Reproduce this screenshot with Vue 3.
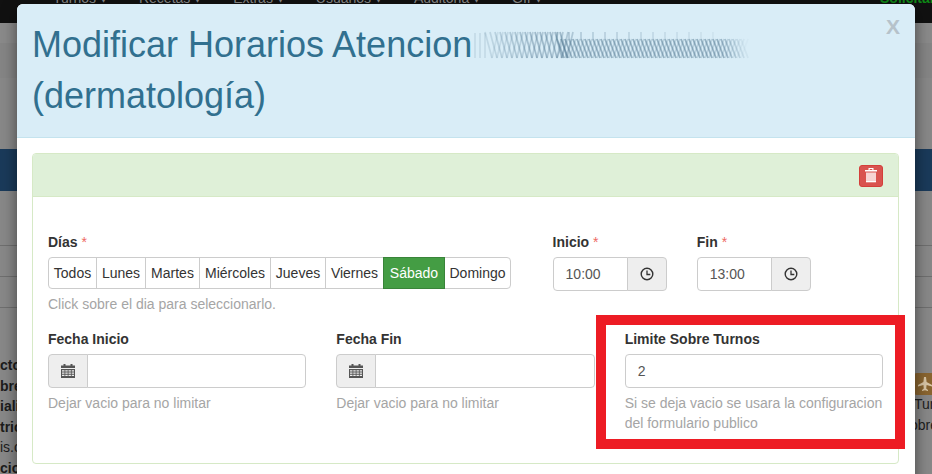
<script setup>
const days = [
  { name: 'Todos', w: 49 },
  { name: 'Lunes', w: 50 },
  { name: 'Martes', w: 55 },
  { name: 'Miércoles', w: 72 },
  { name: 'Jueves', w: 56 },
  { name: 'Viernes', w: 59 },
  { name: 'Sábado', w: 62, active: true },
  { name: 'Domingo', w: 67 }
]
const navItems = ['Turnos', 'Recetas', 'Extras', 'Usuarios', 'Auditoria', 'GII']
const leftBits = [
  { t: 'cto', b: true }, { t: 'bre', b: true }, { t: 'iali', b: true },
  { t: 'tric', b: true }, { t: 'is.c', b: false }, { t: 'cio', b: true }
]
const strokes = []
// pale uprights where the smear begins
for (let x = 2; x < 14; x += 5) {
  strokes.push({ x1: x, y1: 4, x2: x, y2: 29, o: 0.16 })
}
// tall zigzags that strengthen from the left
for (let x = 12; x < 92; x += 5) {
  const o = Math.min(0.42, 0.12 + x / 200)
  strokes.push({ x1: x, y1: 3, x2: x + 7, y2: 29, o })
  strokes.push({ x1: x + 7, y1: 29, x2: x + 13, y2: 3, o: o * 0.75 })
}
// short, dense zigzags of the low band, and pale uprights above them
for (let x = 84; x < 272; x += 4) {
  const fade = x < 246 ? 0.5 : Math.max(0, 0.5 * (1 - (x - 246) / 26))
  strokes.push({ x1: x, y1: 10, x2: x + 7, y2: 29, o: fade })
  strokes.push({ x1: x + 7, y1: 10, x2: x, y2: 29, o: fade * 0.45 })
  if (x < 250 && Math.round(x / 4) % 3 === 0) {
    strokes.push({ x1: x, y1: 3, x2: x, y2: 10, o: Math.max(0.08, 0.32 - (x - 84) / 650) })
  }
}
</script>

<template>
  <div class="screen">
    <div class="page">
      <div class="nav">
        <div class="nav-items">
          <span v-for="n in navItems" :key="n">{{ n }} ▾</span>
        </div>
        <b class="nav-green">Solicitar</b>
      </div>
      <div class="band-a"></div>
      <div class="band-b"></div>
      <div class="band-c"></div>
      <div class="band-blue"></div>
      <div class="band-d"></div>
      <div class="band-row"></div>
      <div class="band-row"></div>
      <div class="rest">
        <div class="left-bits">
          <span v-for="b in leftBits" :key="b.t" :class="{ bold: b.b }">{{ b.t }}</span>
        </div>
        <div class="right-bits">
          <span class="badge">
            <svg width="16" height="16" viewBox="0 0 16 16"><path fill="#d9c6a6" d="M7 1h2l.6 5 5.4 3v1.600L9.600 9l-.4 3.400L11 14v1l-3-.8L5 15v-1l1.800-1.600L6.400 9 1 10.600V9l5.400-3z"/></svg>
          </span>
          <span class="turn">Turn</span>
          <span class="obre">obre</span>
        </div>
      </div>
    </div>

    <div class="modal">
      <div class="modal-head">
        <h3 class="title">Modificar Horarios Atencion<svg class="smear" width="292" height="34" viewBox="0 0 292 34"><line v-for="(s, i) in strokes" :key="i" :x1="s.x1" :y1="s.y1" :x2="s.x2" :y2="s.y2" stroke="#4f7590" stroke-width="1.700" :stroke-opacity="s.o"/></svg><br>(dermatología)</h3>
        <span class="close">X</span>
      </div>
      <div class="modal-body">
        <div class="panel">
          <div class="panel-head">
            <button class="trash" type="button" aria-label="Eliminar">
              <svg width="14" height="16" viewBox="0 0 14 16">
                <path fill="#fff" d="M4.500 0h5v2H13v1.500H1V2h3.500zM5.700 1v1h2.600V1z"/>
                <path fill="#f7d4d3" d="M2 4.500h10V13H2z"/>
                <path fill="#fff" d="M2 13h10v1.300H2z"/>
              </svg>
            </button>
          </div>
          <div class="panel-body">
            <div class="row">
              <div class="col col-7">
                <label>Días <i>*</i></label>
                <div class="btn-group">
                  <button v-for="d in days" :key="d.name" type="button" class="day" :class="{ active: d.active }" :style="{ width: d.w + 'px' }">{{ d.name }}</button>
                </div>
                <p class="help">Click sobre el dia para seleccionarlo.</p>
              </div>
              <div class="col col-2">
                <label>Inicio <i>*</i></label>
                <div class="input-group">
                  <input type="text" value="10:00">
                  <span class="addon addon-right">
                    <svg width="14" height="14" viewBox="0 0 14 14"><circle cx="7" cy="7" r="5.800" fill="none" stroke="#333" stroke-width="1.400"/><path d="M7 3.500V7.500H10.300" fill="none" stroke="#333" stroke-width="1.300"/></svg>
                  </span>
                </div>
              </div>
              <div class="col col-2">
                <label>Fin <i>*</i></label>
                <div class="input-group">
                  <input type="text" value="13:00">
                  <span class="addon addon-right">
                    <svg width="14" height="14" viewBox="0 0 14 14"><circle cx="7" cy="7" r="5.800" fill="none" stroke="#333" stroke-width="1.400"/><path d="M7 3.500V7.500H10.300" fill="none" stroke="#333" stroke-width="1.300"/></svg>
                  </span>
                </div>
              </div>
            </div>
            <div class="row">
              <div class="col col-4">
                <label>Fecha Inicio</label>
                <div class="input-group">
                  <span class="addon addon-left">
                    <svg width="14" height="14" viewBox="0 0 14 14"><path fill="#555" d="M2.500 0h2v1.500h5V0h2v1.500H14V4H0V1.500h2.500z"/><path fill="#555" d="M0 5h14v9H0zM1 6.200v1.300h2.500V6.200zM4.300 6.200v1.300h2.400V6.200zM7.500 6.200v1.300h2.400V6.200zM10.700 6.200v1.300H13V6.200zM1 8.500v1.300h2.500V8.500zM4.300 8.500v1.300h2.400V8.500zM7.500 8.500v1.300h2.400V8.500zM10.700 8.500v1.300H13V8.500zM1 10.800v1.300h2.500v-1.300zM4.300 10.800v1.300h2.400v-1.300zM7.500 10.800v1.300h2.400v-1.300zM10.700 10.800v1.300H13v-1.300z" fill-rule="evenodd"/></svg>
                  </span>
                  <input type="text" value="">
                </div>
                <p class="help">Dejar vacio para no limitar</p>
              </div>
              <div class="col col-4">
                <label>Fecha Fin</label>
                <div class="input-group">
                  <span class="addon addon-left">
                    <svg width="14" height="14" viewBox="0 0 14 14"><path fill="#555" d="M2.500 0h2v1.500h5V0h2v1.500H14V4H0V1.500h2.500z"/><path fill="#555" d="M0 5h14v9H0zM1 6.200v1.300h2.500V6.200zM4.300 6.200v1.300h2.400V6.200zM7.500 6.200v1.300h2.400V6.200zM10.700 6.200v1.300H13V6.200zM1 8.500v1.300h2.500V8.500zM4.300 8.500v1.300h2.400V8.500zM7.500 8.500v1.300h2.400V8.500zM10.700 8.500v1.300H13V8.500zM1 10.800v1.300h2.500v-1.300zM4.300 10.800v1.300h2.400v-1.300zM7.500 10.800v1.300h2.400v-1.300zM10.700 10.800v1.300H13v-1.300z" fill-rule="evenodd"/></svg>
                  </span>
                  <input type="text" value="">
                </div>
                <p class="help">Dejar vacio para no limitar</p>
              </div>
              <div class="col col-4">
                <label>Limite Sobre Turnos</label>
                <div class="input-group">
                  <input type="text" value="2">
                </div>
                <p class="help">Si se deja vacio se usara la configuracion del formulario publico</p>
              </div>
            </div>
          </div>
        </div>
      </div>
    </div>

    <div class="callout"></div>
  </div>
</template>

<style>
html, body { margin: 0; overflow: hidden; }
</style>

<style scoped>
.screen {
  position: relative;
  width: 932px;
  height: 474px;
  overflow: hidden;
  font-family: "Liberation Sans", Arial, sans-serif;
  font-size: 14px;
  line-height: 20px;
  color: #333;
}
.page {
  position: absolute;
  inset: 0;
  display: flex;
  flex-direction: column;
  background: #888;
}
.nav {
  height: 23px;
  flex: none;
  background: #111;
  color: #8a8a8a;
  overflow: hidden;
  position: relative;
}
.nav-items {
  display: flex;
  gap: 32px;
  padding-left: 53px;
  margin-top: -12px;
}
.nav-green {
  position: absolute;
  left: 880px;
  top: -12px;
  color: #0e8a16;
}
.band-a { height: 20px; flex: none; background: #8a8a8a; }
.band-b { height: 35px; flex: none; background: #858585; }
.band-c { height: 71px; flex: none; background: #888; }
.band-blue { height: 42px; flex: none; background: #1a3a5a; }
.band-d { height: 55px; flex: none; background: #888; border-bottom: 1px solid #6f6f6f; box-sizing: border-box; }
.band-row { height: 31px; flex: none; background: #888; border-bottom: 1px solid #6f6f6f; box-sizing: border-box; }
.band-row:last-of-type { border-bottom-width: 2px; }
.rest {
  flex: 1;
  display: flex;
  justify-content: space-between;
  padding-top: 47px;
}
.left-bits, .right-bits {
  display: flex;
  flex-direction: column;
  color: #1c1c1c;
}
.left-bits span { height: 20.500px; }
.left-bits .bold { font-weight: bold; }
.right-bits {
  width: 18px;
  margin-top: 18px;
  white-space: nowrap;
  line-height: 21px;
  overflow: hidden;
}
.obre { margin-left: -4px; }
.badge {
  display: flex;
  align-items: center;
  justify-content: center;
  flex: none;
  width: 22px;
  height: 22px;
  margin-bottom: -1px;
  border-radius: 3px;
  background: #8a6530;
  box-sizing: border-box;
}
.modal {
  position: absolute;
  left: 17px;
  top: 4px;
  width: 898px;
  height: 520px;
  background: #fff;
  border-radius: 6px;
  box-shadow: 0 5px 15px rgba(0, 0, 0, 0.5);
}
.modal-head {
  display: flex;
  padding: 15px;
  background: #d9edf7;
  border-bottom: 1px solid #c4e3ee;
  border-radius: 6px 6px 0 0;
}
.title {
  flex: 1;
  margin: 0;
  font-size: 36px;
  font-weight: 400;
  line-height: 51.400px;
  color: #31708f;
  white-space: nowrap;
}
.smear {
  vertical-align: -6px;
  margin-left: 1px;
  filter: blur(0.7px);
}
.close {
  margin-top: -3px;
  font-size: 21px;
  font-weight: bold;
  line-height: 1;
  color: #b6c2ca;
}
.modal-body { padding: 15px 16px 15px 15px; }
.panel {
  border: 1px solid #d6e9c6;
  border-radius: 4px;
}
.panel-head {
  display: flex;
  justify-content: flex-end;
  padding: 11px 15px 9px;
  background: #dff0d8;
  border-bottom: 1px solid #d6e9c6;
  border-radius: 3px 3px 0 0;
}
.trash {
  display: flex;
  align-items: center;
  justify-content: center;
  width: 24px;
  height: 22px;
  padding: 0;
  background: #d9534f;
  border: 1px solid #d43f3a;
  border-radius: 3px;
}
.panel-body { padding: 35px 15px 15px; }
.row {
  display: grid;
  grid-template-columns: repeat(12, 1fr);
  margin: 0 -15px;
}
.col { padding: 0 15px 15px; min-width: 0; }
.col-7 { grid-column: span 7; }
.col-2 { grid-column: span 2; }
.col-4 { grid-column: span 4; }
label {
  display: block;
  margin-bottom: 5px;
  font-weight: bold;
}
label i { font-style: normal; font-weight: normal; color: #ee6a63; }
.btn-group { display: flex; }
.day {
  flex: none;
  height: 32px;
  margin-left: -1px;
  padding: 0;
  font: inherit;
  color: #333;
  background: #fff;
  border: 1px solid #ccc;
}
.day:first-child { margin-left: 0; border-radius: 4px 0 0 4px; }
.day:last-child { border-radius: 0 4px 4px 0; }
.day.active {
  position: relative;
  color: #fff;
  background: #449d44;
  border-color: #398439;
}
.help {
  margin: 5px 0 0;
  color: #a5a5a5;
}
.input-group { display: flex; height: 34px; }
input {
  flex: 1;
  min-width: 0;
  box-sizing: border-box;
  height: 34px;
  padding: 6px 12px;
  font: inherit;
  color: #555;
  background: #fff;
  border: 1px solid #ccc;
  border-radius: 4px;
  outline: none;
}
.addon {
  flex: none;
  display: flex;
  align-items: center;
  justify-content: center;
  box-sizing: border-box;
  width: 40px;
  background: #eee;
  border: 1px solid #ccc;
}
.addon-right {
  border-radius: 0 4px 4px 0;
  margin-left: -1px;
}
.addon-left {
  border-radius: 4px 0 0 4px;
  margin-right: -1px;
}
.input-group:has(.addon-right) input { border-radius: 4px 0 0 4px; }
.input-group:has(.addon-left) input { border-radius: 0 4px 4px 0; }
.callout {
  position: absolute;
  left: 596px;
  top: 315px;
  width: 309px;
  height: 134px;
  box-sizing: border-box;
  border: 10px solid #ed1c24;
}
</style>
